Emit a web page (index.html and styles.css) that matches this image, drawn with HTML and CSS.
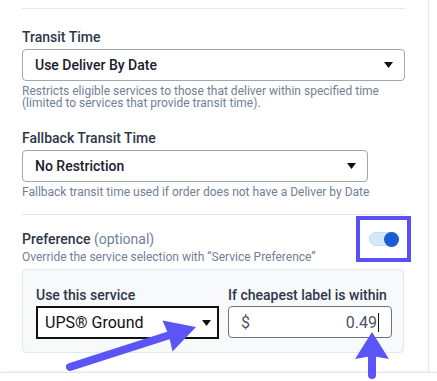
FILE: index.html
```html
<!DOCTYPE html>
<html lang="en">
<head>
    <meta charset="UTF-8">
    <meta name="viewport" content="width=device-width, initial-scale=1.0">
    <title>Shipping Rule - Service Settings</title>
    <link rel="stylesheet" href="styles.css">
</head>
<body>
    <div class="sidebar">
        <div class="content">
            <hr class="divider">

            <div class="field first">
                <label class="label">Transit Time</label>
                <div class="select wide">
                    <span>Use Deliver By Date</span>
                    <svg class="caret" width="9" height="6" viewBox="0 0 9 6"><path d="M0 0h9L4.5 6z"/></svg>
                </div>
                <p class="help">Restricts eligible services to those that deliver within specified time (limited to services that provide transit time).</p>
            </div>

            <div class="field">
                <label class="label">Fallback Transit Time</label>
                <div class="select medium">
                    <span>No Restriction</span>
                    <svg class="caret" width="9" height="6" viewBox="0 0 9 6"><path d="M0 0h9L4.5 6z"/></svg>
                </div>
                <p class="help">Fallback transit time used if order does not have a Deliver by Date</p>
            </div>

            <hr class="divider spaced">

            <div class="pref">
                <div class="pref-head">
                    <div>
                        <div class="label">Preference <span class="optional">(optional)</span></div>
                        <p class="help">Override the service selection with “Service Preference”</p>
                    </div>
                    <div class="toggle on">
                        <span class="knob"></span>
                    </div>
                </div>

                <div class="pref-box">
                    <div class="col">
                        <label class="label small">Use this service</label>
                        <div class="select focused">
                            <span>UPS® Ground</span>
                            <svg class="caret" width="9" height="6" viewBox="0 0 9 6"><path d="M0 0h9L4.5 6z"/></svg>
                        </div>
                    </div>
                    <div class="col">
                        <label class="label small">If cheapest label is within</label>
                        <div class="money">
                            <span class="currency">$</span>
                            <span class="amount">0.49</span><span class="cursor"></span>
                        </div>
                    </div>
                </div>
            </div>
        </div>
    </div>

    <div class="footer"></div>

    <!-- annotation overlay -->
    <div class="highlight"></div>
    <svg class="annotations" width="437" height="381" viewBox="0 0 437 381">
        <line x1="70" y1="367" x2="176" y2="333" stroke="#5b55f7" stroke-width="8" stroke-linecap="round"/>
        <path d="M196 327 L162.5 320.5 L169 336 L172.5 351.5 Z" fill="#5b55f7"/>
        <line x1="372" y1="375" x2="372" y2="352" stroke="#5b55f7" stroke-width="8" stroke-linecap="round"/>
        <path d="M372 332 L389 359 L372 356 L355 359 Z" fill="#5b55f7"/>
    </svg>
</body>
</html>
```

FILE: styles.css
```css
html, body {
    margin: 0;
    height: 381px;
    overflow: hidden;
    background: #fff;
}

body {
    font-family: Roboto, "Liberation Sans", sans-serif;
    color: #2d3748;
}

.sidebar {
    width: 429px;
    height: 381px;
    border-right: 1px solid #e5e7eb;
    box-sizing: border-box;
}

.content {
    padding: 8px 23px 0 22px;
}

.divider {
    margin: 0;
    border: none;
    border-top: 1px solid #e5e7eb;
}

.divider.spaced {
    margin-top: 16px;
}

.field {
    margin-top: 21px;
}

.field.first {
    margin-top: 20px;
}

.label {
    display: block;
    font-size: 14px;
    line-height: 16px;
    font-weight: 500;
    color: #2d3748;
    margin-bottom: 4px;
}

.label.small {
    margin-bottom: 3px;
}

.optional {
    font-weight: 400;
    color: #718096;
}

.select {
    display: flex;
    align-items: center;
    justify-content: space-between;
    height: 32px;
    box-sizing: border-box;
    padding: 0 11px 0 12px;
    border: 1px solid #a0a7b4;
    border-radius: 4px;
    background: #fff;
    font-size: 14px;
    font-weight: 500;
    color: #1a202c;
}

.select .caret {
    fill: #111;
}

.select.wide {
    width: 383px;
}

.select.medium {
    width: 346px;
}

.select.focused {
    width: 183px;
    height: 33px;
    border: 2px solid #111;
    border-radius: 0;
    padding: 0 6px 0 7px;
    font-size: 16px;
    font-weight: 400;
    color: #111;
}

.help {
    margin: 4px 0 0;
    font-size: 12px;
    line-height: 12px;
    color: #718096;
}

.pref {
    margin-top: 16px;
}

.pref-head {
    display: flex;
    justify-content: space-between;
    align-items: flex-start;
}

.pref-head .label {
    margin-bottom: 4px;
}

.pref-head .help {
    margin-top: 0;
}

.toggle {
    width: 30px;
    height: 14px;
    margin: 0 6px 0 0;
    position: relative;
    top: 1px;
    border-radius: 7px;
    background: #d3e8fb;
    border: 1px solid #c4ddf5;
    box-sizing: border-box;
}

.toggle .knob {
    position: absolute;
    right: -1px;
    top: -1px;
    width: 15px;
    height: 15px;
    border-radius: 50%;
    background: #1b5bd6;
}

.pref-box {
    margin-top: 6px;
    width: 382px;
    height: 84px;
    box-sizing: border-box;
    padding: 17px 12px 0 13px;
    display: flex;
    gap: 9px;
    background: #f7f9fb;
    border: 1px solid #e2e8f0;
    border-radius: 4px;
}

.money {
    width: 164px;
    height: 32px;
    box-sizing: border-box;
    display: flex;
    align-items: center;
    padding: 0 12px 0 12px;
    border: 1px solid #6b7280;
    border-radius: 4px;
    background: #fff;
    font-size: 16px;
    color: #4a5568;
}

.currency {
    flex: 1;
}

.cursor {
    display: inline-block;
    width: 1px;
    height: 19px;
    margin-left: 1px;
    background: #111;
}

.footer {
    position: fixed;
    left: 0;
    right: 0;
    bottom: 0;
    height: 8px;
    background: #fff;
    border-top: 1px solid #e2e5e9;
    box-shadow: 0 -1px 3px rgba(0, 0, 0, 0.06);
}

.highlight {
    position: absolute;
    left: 356px;
    top: 216px;
    width: 55px;
    height: 46px;
    box-sizing: border-box;
    border: 4px solid #5b50f6;
}

.annotations {
    position: absolute;
    left: 0;
    top: 0;
}
```
